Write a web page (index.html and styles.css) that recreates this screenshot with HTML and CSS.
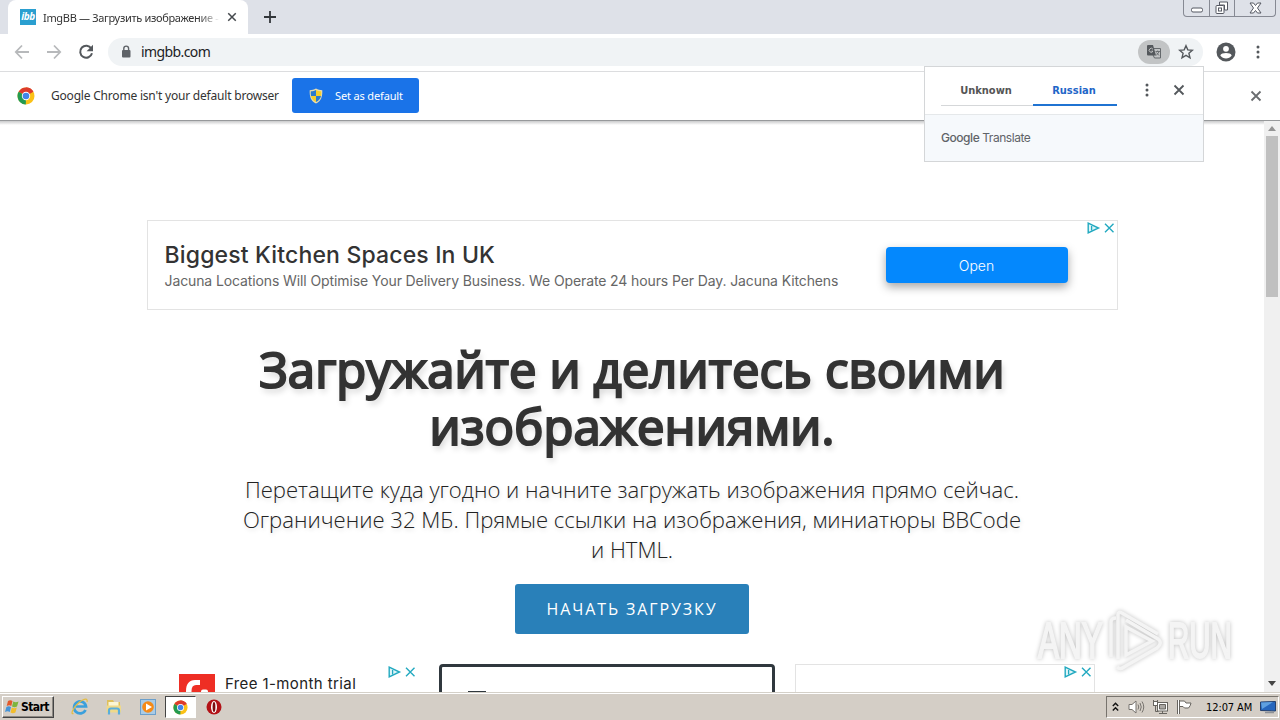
FILE: index.html
```html
<!DOCTYPE html>
<html lang="ru">

<head>
  <meta charset="UTF-8">
  <meta name="viewport" content="width=device-width, initial-scale=1.0">
  <title>ImgBB</title>
  <link rel="stylesheet" href="styles.css">
</head>

<body>
  <!-- shared icons -->
  <svg class="defs">
    <symbol id="chrome" viewBox="0 0 18 18">
      <circle cx="9" cy="9" r="8.5" fill="#fbc116" />
      <path d="M9 9L1.6 4.8A8.5 8.5 0 0 1 16.4 4.8z" fill="#dc3b2c" />
      <path d="M9 9L8.8 17.5A8.5 8.5 0 0 1 1.6 4.8z" fill="#239a50" />
      <path d="M9 9V4.8h7.4A8.5 8.5 0 0 0 9 .5z" fill="#dc3b2c" />
      <circle cx="9" cy="9" r="4.2" fill="#fff" />
      <circle cx="9" cy="9" r="3.3" fill="#4285e8" />
    </symbol>
    <symbol id="close" viewBox="0 0 12 12">
      <path d="M1.5 1.5l9 9M10.5 1.5l-9 9" fill="none" stroke="currentColor" stroke-width="1.8" />
    </symbol>
    <symbol id="adinfo" viewBox="0 0 28 12">
      <path d="M1.2 1.2v9.6L11.500 6z" fill="#dff5f8" stroke="#22a9c0" stroke-width="1.4" />
      <path d="M4.600 4v4.500" stroke="#22a9c0" stroke-width="1.3" />
      <path d="M18 1.800l8.500 8.500M26.500 1.800l-8.500 8.500" fill="none" stroke="#22a9c0" stroke-width="1.4" />
    </symbol>
    <symbol id="dots" viewBox="0 0 4 14">
      <circle cx="2" cy="2" r="1.5" /><circle cx="2" cy="7" r="1.5" /><circle cx="2" cy="12" r="1.500" />
    </symbol>
  </svg>

  <div class="tabs">
    <div class="tab">
      <span class="logo">ibb</span>
      <span class="title">ImgBB — Загрузить изображение -</span>
      <svg class="tabclose"><use href="#close" /></svg>
    </div>
    <svg class="plus" viewBox="0 0 12 12"><path d="M6 0v12M0 6h12" stroke="#33373b" stroke-width="1.8" /></svg>
    <div class="winbtns">
      <span><svg width="14" height="8" viewBox="0 0 14 8"><rect x="1.500" y="2" width="11" height="4" rx="1.500" fill="#fff" stroke="#555862" /></svg></span>
      <span><svg width="14" height="14" viewBox="0 0 14 14" fill="#fff" stroke="#555862"><path d="M4.500 1h8v8h-3V4h-5z" /><rect x="1" y="4.500" width="8" height="8" rx="1" /><rect x="3.500" y="7" width="3" height="3" /></svg></span>
      <span><svg width="13" height="12" viewBox="0 0 13 12"><path d="M1 1h3.500l2 2.500L8.500 1H12L8.500 6 12 11H8.500l-2-2.500-2 2.500H1L4.500 6z" fill="#fff" stroke="#555862" /></svg></span>
    </div>
  </div>

  <div class="toolbar">
    <svg class="nav" viewBox="0 0 16 16"><path d="M15 8H2M8 1.500L1.800 8 8 14.500" fill="none" stroke="#b7b9bb" stroke-width="1.800" /></svg>
    <svg class="nav" viewBox="0 0 16 16"><path d="M1 8h13M8 1.500L14.200 8 8 14.500" fill="none" stroke="#b7b9bb" stroke-width="1.800" /></svg>
    <svg class="nav" viewBox="0 0 16 16"><path d="M13.300 4.500A6 6 0 1 0 14 9.300" fill="none" stroke="#54585c" stroke-width="2" /><path d="M15 .8v6.400H8.600z" fill="#54585c" /></svg>
    <div class="omnibox">
      <svg class="lock" viewBox="0 0 10 13"><rect x="1" y="5" width="8.500" height="7.500" rx="1" fill="#5f6368" /><path d="M2.800 5V3.500a2.400 2.400 0 0 1 4.800 0V5" fill="none" stroke="#5f6368" stroke-width="1.400" /></svg>
      <span class="url">imgbb.com</span>
      <span class="transbtn">
        <svg width="16" height="16" viewBox="0 0 16 16"><path d="M7 4.500h7.500v9.500H8.500L7 11" fill="none" stroke="#65696c" /><path d="M2 1h5l3 10.500H2a1 1 0 0 1-1-1V2a1 1 0 0 1 1-1z" fill="#54585c" /><path d="M7 5.400A2 2 0 1 0 7 7.200H5.300" fill="none" stroke="#ccc" stroke-width=".9" /><path d="M9.500 7.500H14M11.700 6.500v1M13 7.700c-.5 1.600-1.500 2.600-2.800 3.500M10.500 8.500l2.500 3" fill="none" stroke="#65696c" stroke-width=".9" /></svg>
      </span>
      <svg class="star" viewBox="0 0 16 16"><path d="M8 1.700l1.800 4.200 4.600.4-3.500 3 1.100 4.500L8 11.400l-4 2.400 1.100-4.500-3.500-3 4.600-.4z" fill="none" stroke="#54585c" stroke-width="1.400" /></svg>
    </div>
    <svg class="user" viewBox="0 0 20 20"><circle cx="10" cy="10" r="9.500" fill="#54585c" /><circle cx="10" cy="6.800" r="2.900" fill="#fff" /><path d="M4.300 13.500c1-3.200 10.400-3.200 11.400 0-2.600 4-8.800 4-11.400 0z" fill="#fff" /></svg>
    <svg class="menu"><use href="#dots" /></svg>
  </div>

  <div class="infobar">
    <svg class="chromeicon"><use href="#chrome" /></svg>
    <span class="infotext">Google Chrome isn't your default browser</span>
    <button class="setdef">
      <svg width="14" height="16" viewBox="0 0 14 16"><path d="M7 .5c2 1.300 4 1.700 6.300 1.700C13.500 8 12.500 13 7 15.500 1.500 13 .5 8 .7 2.200 3 2.200 5 1.800 7 .5z" fill="#e8ddb0" /><path d="M7 2v6H2C1.700 6.500 1.700 5 1.800 3.300 4 3.300 5.500 2.800 7 2z" fill="#2b7bd0" /><path d="M7 2v6h5c.3-1.500.3-3 .2-4.700C10 3.300 8.500 2.800 7 2z" fill="#f5ce2e" /><path d="M7 14V8H2c.6 2.800 2.200 4.800 5 6z" fill="#f5ce2e" /><path d="M7 14V8h5c-.6 2.800-2.200 4.800-5 6z" fill="#2b7bd0" /></svg>
      <span>Set as default</span>
    </button>
    <svg class="infoclose"><use href="#close" /></svg>
  </div>

  <div class="view">
    <div class="page">
      <div class="banner">
        <div class="bannertext">
          <div class="bannertitle">Biggest Kitchen Spaces In UK</div>
          <div class="bannerdesc">Jacuna Locations Will Optimise Your Delivery Business. We Operate 24 hours Per Day. Jacuna Kitchens</div>
        </div>
        <button class="open">Open</button>
        <svg class="adinfo"><use href="#adinfo" /></svg>
      </div>

      <h1>Загружайте и делитесь своими<br>изображениями.</h1>
      <p class="desc">
        Перетащите куда угодно и начните загружать изображения прямо сейчас.<br>
        Ограничение 32 МБ. Прямые ссылки на изображения, миниатюры BBCode<br>
        и HTML.
      </p>
      <button class="upload">НАЧАТЬ ЗАГРУЗКУ</button>

      <div class="ads">
        <div class="ad ad1">
          <svg class="redlogo" viewBox="0 0 36 36"><path d="M0 0h36v36H0z" fill="#ee2e24" /><path d="M7 20v-3c0-7 3-11 9-11h5v5h-4c-3 0-4.500 2-4.500 6v3z" fill="#fff" /><rect x="22" y="15.500" width="7" height="6" rx="2" fill="#fff" /></svg>
          <span class="trial">Free 1-month trial</span>
          <svg class="adinfo"><use href="#adinfo" /></svg>
        </div>
        <div class="ad ad2"><i></i></div>
        <div class="ad ad3"><svg class="adinfo"><use href="#adinfo" /></svg></div>
      </div>
    </div>
    <div class="scroll">
      <i class="up"></i>
      <div class="thumb"></div>
      <i class="down"></i>
    </div>
  </div>

  <div class="taskbar">
    <div class="start">
      <svg width="17" height="16" viewBox="0 0 17 16"><path d="M4 2c1.500-1 3-1 4.500 0L7.300 7C6 6 4.500 6 2.700 7z" fill="#e2592b" /><path d="M9.300 2.500c1.700 1 3.200 1 5.200 0L13 7.500c-1.800.9-3.300.9-5 0z" fill="#7db53d" /><path d="M2.400 8c1.600-1 3-1 4.600 0l-1.200 5C4.300 12 2.800 12 1 13z" fill="#4594d8" /><path d="M7.800 8.500c1.700 1 3.200 1 5 0l-1.400 5c-1.700 1-3.200 1-4.900 0z" fill="#f2bd2c" /></svg>
      <span>Start</span>
    </div>
    <div class="task">
      <svg width="18" height="18" viewBox="0 0 18 18"><path d="M14.500 12A6 6 0 1 1 15 8.500H5" fill="none" stroke="#3ba0dc" stroke-width="2.700" /><path d="M2.500 15.500C-1 17 2 9.500 8 4.500S17 .5 16 4" fill="none" stroke="#e5bd42" stroke-width="1.200" /></svg>
    </div>
    <div class="task">
      <svg width="18" height="18" viewBox="0 0 18 18"><path d="M2 2h6l1 2h6v10H2z" fill="#dfc05c" /><path d="M3.500 4h10v5h-10z" fill="#fbf6d4" /><path d="M1.500 7.500h14.500v7H1.500z" fill="#efd98a" /><path d="M4 16.500v-4Q4 10.500 6 10.500h6q2 0 2 2v4" fill="none" stroke="#5aaedb" stroke-width="2.200" /></svg>
    </div>
    <div class="task">
      <svg width="18" height="18" viewBox="0 0 18 18"><rect x="1.500" y="1.500" width="15" height="15" fill="#a9cbe6" stroke="#6b9fcb" /><circle cx="9" cy="9" r="5.800" fill="#f58a18" /><path d="M7 5.500L13 9l-6 3.500z" fill="#fff" /></svg>
    </div>
    <div class="task active"><svg width="15" height="15"><use href="#chrome" /></svg></div>
    <div class="task">
      <svg width="16" height="16" viewBox="0 0 16 16"><circle cx="8" cy="8" r="7.500" fill="#b31217" /><ellipse cx="8" cy="8" rx="3" ry="6" fill="#fff" /><ellipse cx="8" cy="8" rx="1.400" ry="5" fill="#7c0d10" /></svg>
    </div>
    <div class="tray">
      <svg width="7" height="10" viewBox="0 0 7 10"><path d="M.8 4l2.700-2.800L6.200 4M.8 8.500l2.700-2.800 2.700 2.800" fill="none" stroke="#111" stroke-width="1.400" /></svg>
      <svg class="vol" width="17" height="14" viewBox="0 0 17 14" fill="none" stroke="#77736e"><path d="M1 4.500h3L8 1v12L4 9.500H1z" fill="#fff" /><path d="M10 4.500q1.500 2.500 0 5M12 3q2.500 4 0 8M14 1.500q3.500 5.500 0 11" /></svg>
      <svg class="net" width="17" height="16" viewBox="0 0 17 16" stroke="#67645f"><rect x="5.500" y="3.500" width="10" height="8.500" fill="#fff" /><path d="M7.500 5.500h6v4.500h-6z" fill="#aaa7a3" /><path d="M1.500 1v4h4V1M3.500 5v7.500h3M7 14.500h8M10.500 12v2" fill="none" /><rect x="1.500" y="2.500" width="4" height="4" fill="#fff" /></svg>
      <svg class="flag" width="16" height="16" viewBox="0 0 16 16" stroke="#67645f"><path d="M3.500 2h5l1.500 2h5q-.5 3-2.500 5h-4L7 7.500H3.500z" fill="#fff" /><path d="M2.500 1v14" stroke="#fff" stroke-width="2" /><path d="M1.500 1v14M3.500 1v14" fill="none" /></svg>
      <span class="time">12:07 AM</span>
      <svg class="desk" width="16" height="13" viewBox="0 0 16 13"><path d="M.5 1l15-.5v9.500l-15-.5z" fill="#2666bd" stroke="#25416d" /><path d="M1 1.500L13 1 2 8z" fill="#5fa0e0" /><path d="M5 11.500h9" stroke="#8e9196" stroke-width="1.500" /></svg>
    </div>
  </div>

  <!-- translate popup -->
  <div class="popup">
    <div class="poptop">
      <div class="lang">Unknown</div>
      <div class="lang on">Russian</div>
      <svg class="popdots"><use href="#dots" /></svg>
      <svg class="popclose"><use href="#close" /></svg>
    </div>
    <div class="popbot"><b>Google</b> <span>Translate</span></div>
  </div>

  <!-- watermark -->
  <div class="mark">
    <span class="any">ANY</span>
    <svg width="58" height="66" viewBox="0 0 58 66" fill="none" stroke="currentColor" stroke-width="3.500"><path d="M4 49V14q0-4 5-4M11 51V7q0-4 4-2l36 21M19 19v28l26-14zM10 59q3 3 7 0l33-19q6-5 1-9L19 12" /></svg>
    <span class="run">RUN</span>
  </div>
</body>

</html>
```
FILE: styles.css
```css
* {
  box-sizing: border-box;
}

body {
  position: relative;
  display: flex;
  flex-direction: column;
  width: 1280px;
  height: 720px;
  margin: 0;
  overflow: hidden;
  background: #fff;
  font-family: "DejaVu Sans Condensed", "Noto Sans", sans-serif;
  font-size: 11px;
  color: #333;
}

svg {
  display: block;
  flex: none;
}

button {
  border: 0;
  padding: 0;
}

.defs {
  position: absolute;
  width: 0;
  height: 0;
}

/* tabs */
.tabs {
  display: flex;
  height: 34px;
  flex: none;
  background: #dee1e8;
  padding-left: 8px;
}

.tab {
  display: flex;
  align-items: center;
  width: 240px;
  height: 34px;
  padding: 0 10px 0 12px;
  border-radius: 8px 8px 0 0;
  background: #fff;
}

.logo {
  width: 16px;
  height: 16px;
  background: #2a9fd0;
  color: #fff;
  font: italic bold 10px/15px "Open Sans", sans-serif;
  letter-spacing: -0.5px;
  text-align: center;
}

.title {
  width: 177px;
  margin-left: 7px;
  overflow: hidden;
  white-space: nowrap;
  font-family: "Noto Sans", sans-serif;
  letter-spacing: -0.32px;
  -webkit-mask-image: linear-gradient(90deg, #000 88%, transparent);
  mask-image: linear-gradient(90deg, #000 88%, transparent);
}

.tabclose {
  width: 10px;
  height: 10px;
  margin-left: 7px;
  color: #45494d;
}

.plus {
  width: 12px;
  height: 12px;
  margin: 11px 0 0 16px;
}

.winbtns {
  display: flex;
  height: 17px;
  margin: 0 4px 0 auto;
  border: 1px solid #868993;
  border-top: 0;
  border-radius: 0 0 4px 4px;
}

.winbtns span {
  display: flex;
  align-items: center;
  justify-content: center;
  width: 25px;
  border-left: 1px solid #868993;
}

.winbtns span:first-child {
  border: 0;
  align-items: flex-end;
  padding-bottom: 2px;
}

.winbtns span:last-child {
  width: 41px;
}

/* toolbar */
.toolbar {
  display: flex;
  align-items: center;
  height: 38px;
  flex: none;
  padding: 0 20px 2px 14px;
  border-bottom: 1px solid #dcdddf;
}

.nav {
  width: 16px;
  height: 16px;
  margin-right: 16px;
}

.omnibox {
  display: flex;
  align-items: center;
  width: 1095px;
  height: 28px;
  margin-left: -2px;
  padding-left: 13px;
  border-radius: 14px;
  background: #f0f3f5;
}

.lock {
  width: 10px;
  height: 13px;
}

.url {
  margin-left: 10px;
  font-family: "Noto Sans", sans-serif;
  font-size: 14px;
  letter-spacing: -0.6px;
  color: #202124;
}

.transbtn {
  display: flex;
  align-items: center;
  justify-content: center;
  width: 32px;
  height: 24px;
  margin-left: auto;
  border-radius: 12px;
  background: #c2c4c5;
}

.star {
  width: 16px;
  height: 16px;
  margin: 0 9px 0 8px;
}

.user {
  width: 20px;
  height: 20px;
  margin-left: 13px;
}

.menu {
  width: 4px;
  height: 14px;
  margin-left: auto;
  fill: #54585c;
}

/* infobar */
.infobar {
  display: flex;
  align-items: center;
  height: 49px;
  flex: none;
  padding: 0 18px 1px 17px;
  border-bottom: 1px solid #97999b;
}

.chromeicon {
  width: 18px;
  height: 18px;
}

.infotext {
  width: 241px;
  margin-left: 16px;
  white-space: nowrap;
  font-family: "Noto Sans", sans-serif;
  font-size: 12px;
  letter-spacing: -0.2px;
}

.setdef {
  display: flex;
  align-items: center;
  width: 127px;
  height: 35px;
  padding-left: 17px;
  border-radius: 3px;
  background: #1a73e8;
  color: #fff;
  font-family: "Noto Sans", sans-serif;
  font-size: 11px;
  letter-spacing: -0.15px;
  white-space: nowrap;
}

.setdef span {
  margin-left: 12px;
}

.infoclose {
  width: 12px;
  height: 12px;
  margin-left: auto;
  color: #6a6d70;
}

/* page */
.view {
  display: flex;
  height: 571px;
  flex: none;
  overflow: hidden;
}

.page {
  display: flex;
  flex-direction: column;
  align-items: center;
  width: 1264px;
  padding-top: 99px;
  background: linear-gradient(#c9cacb, #fff 4px);
}

.banner {
  position: relative;
  display: flex;
  align-items: center;
  width: 971px;
  height: 90px;
  flex: none;
  border: 1px solid #e3e3e3;
  padding: 0 49px 0 17px;
}

.bannertext {
  padding-top: 1px;
  font-family: Inter, sans-serif;
  white-space: nowrap;
}

.bannertitle {
  font-size: 23px;
  line-height: 30px;
  font-weight: 500;
  letter-spacing: 0.16px;
}

.bannerdesc {
  font-size: 14px;
  line-height: 22px;
  letter-spacing: -0.11px;
  color: #666;
}

.open {
  width: 182px;
  height: 36px;
  margin-left: auto;
  border-radius: 4px;
  background: #0488fd;
  box-shadow: 0 4px 10px rgba(0, 0, 0, .35);
  color: #fff;
  font: 300 14px Inter, sans-serif;
}

.adinfo {
  position: absolute;
  top: 1px;
  right: 2px;
  width: 28px;
  height: 12px;
}

h1 {
  margin: 31px 0 0;
  font: 400 49px/57px "Open Sans", sans-serif;
  letter-spacing: 0.1px;
  -webkit-text-stroke: 2.2px #333;
  text-align: center;
  white-space: nowrap;
  text-shadow: 2px 4px 6px rgba(0, 0, 0, .2);
}

.desc {
  margin: 19px 0 0;
  font: 300 22.1px/30px "Open Sans", sans-serif;
  text-align: center;
  white-space: nowrap;
  color: #222;
  text-shadow: 1px 2px 4px rgba(0, 0, 0, .15);
}

.upload {
  width: 234px;
  height: 50px;
  flex: none;
  margin-top: 20px;
  border-radius: 3px;
  background: #2980b9;
  color: #fff;
  font: 400 16px "Open Sans", sans-serif;
  letter-spacing: 1.9px;
}

.ads {
  display: flex;
  width: 926px;
  margin-top: 30px;
}

.ad {
  position: relative;
  height: 40px;
}

.ad1 {
  display: flex;
  width: 250px;
  padding: 10px 0 0 10px;
}

.ad1 .adinfo {
  top: 2px;
  right: 3px;
}

.redlogo {
  width: 36px;
  height: 36px;
}

.trial {
  margin-left: 10px;
  font: 15px/20px Inter, sans-serif;
  letter-spacing: 0.4px;
  white-space: nowrap;
  color: #222;
}

.ad2 {
  width: 336px;
  margin-left: 20px;
  padding: 24px 0 0 26px;
  border: 3px solid #30383e;
  border-radius: 4px;
}

.ad2 i {
  display: block;
  width: 18px;
  height: 3px;
  background: #30383e;
}

.ad3 {
  width: 300px;
  margin-left: 20px;
  border: 1px solid #e3e3e3;
}

/* scrollbar */
.scroll {
  display: flex;
  flex-direction: column;
  align-items: center;
  width: 16px;
  background: #f0f0f0;
  padding: 5px 0 6px;
}

.up,
.down {
  border: 4px solid transparent;
  border-top: 0;
  border-bottom: 5px solid #949494;
}

.thumb {
  width: 12px;
  height: 161px;
  margin-top: 5px;
  background: #c0c0c0;
}

.down {
  margin-top: auto;
  border-top: 5px solid #444;
  border-bottom: 0;
}

/* taskbar */
.taskbar {
  display: flex;
  height: 28px;
  flex: none;
  padding: 3px 1px 2px 2px;
  border-top: 1px solid #d4d0c8;
  box-shadow: inset 0 1px #fff;
  background: #d4cec6;
}

.start {
  display: flex;
  align-items: center;
  width: 52px;
  height: 22px;
  margin-right: 10px;
  padding-left: 1px;
  border: 1px solid;
  border-color: #fff #444 #444 #fff;
  box-shadow: inset -1px -1px #8d8983;
  font-weight: bold;
  font-size: 12px;
  letter-spacing: -0.6px;
  color: #000;
}

.task {
  display: flex;
  align-items: center;
  justify-content: center;
  width: 31px;
  height: 22px;
  margin-right: 3px;
}

.task.active {
  margin: 0 2px 0 -1px;
  background: #fff;
  border: 1px solid;
  border-color: #444 #fff #fff #444;
}

.tray {
  display: flex;
  align-items: center;
  width: 173px;
  height: 22px;
  margin-left: auto;
  padding: 0 2px 0 5px;
  border: 1px solid;
  border-color: #77736d #fff #fff #77736d;
}

.vol {
  margin-left: 9px;
}

.net {
  margin-left: 7px;
}

.flag {
  margin-left: 7px;
}

.time {
  margin-left: 14px;
  white-space: nowrap;
  font-size: 11px;
  letter-spacing: -0.1px;
  color: #000;
}

.desk {
  margin-left: auto;
}

/* translate popup */
.popup {
  position: absolute;
  top: 66px;
  left: 924px;
  width: 280px;
  height: 96px;
  border: 1px solid #d4d6d8;
  background: #fff;
}

.poptop {
  display: flex;
  height: 48px;
  padding: 8px 0 0 16px;
  border-bottom: 1px solid #e5e8ea;
}

.lang {
  width: 92px;
  height: 31px;
  padding-right: 2px;
  border-bottom: 1px solid #d5d7d9;
  font: bold 11px/31px "DejaVu Sans Condensed", sans-serif;
  text-align: center;
  color: #555;
}

.lang.on {
  width: 84px;
  border-bottom: 2px solid #1f73d2;
  color: #1f66c8;
}

.popdots {
  width: 4px;
  height: 14px;
  margin: 8px 0 0 28px;
  fill: #54585c;
}

.popclose {
  width: 12px;
  height: 12px;
  margin: 9px 0 0 24px;
  color: #54585c;
}

.popbot {
  height: 46px;
  padding-left: 16px;
  background: #f6f9fc;
  font: 12px/46px Inter, sans-serif;
  letter-spacing: -0.45px;
  color: #5f6368;
}

.popbot b {
  font-weight: 500;
}

/* watermark */
.mark {
  position: absolute;
  top: 608px;
  left: 1038px;
  display: flex;
  align-items: center;
  width: 200px;
  height: 66px;
  filter: drop-shadow(0 0 2px rgba(0, 0, 0, .25));
  color: #f4f4f4;
  font: 50px/66px "Liberation Sans Narrow", "Liberation Sans", sans-serif;
  -webkit-text-stroke: 2px #f4f4f4;
}

.mark span {
  width: 66px;
  transform: scaleX(.63);
  transform-origin: 0 50%;
}

.mark .run {
  margin-left: 3px;
  transform: scaleX(.59);
}

.mark svg {
  margin-left: 3px;
}
```
